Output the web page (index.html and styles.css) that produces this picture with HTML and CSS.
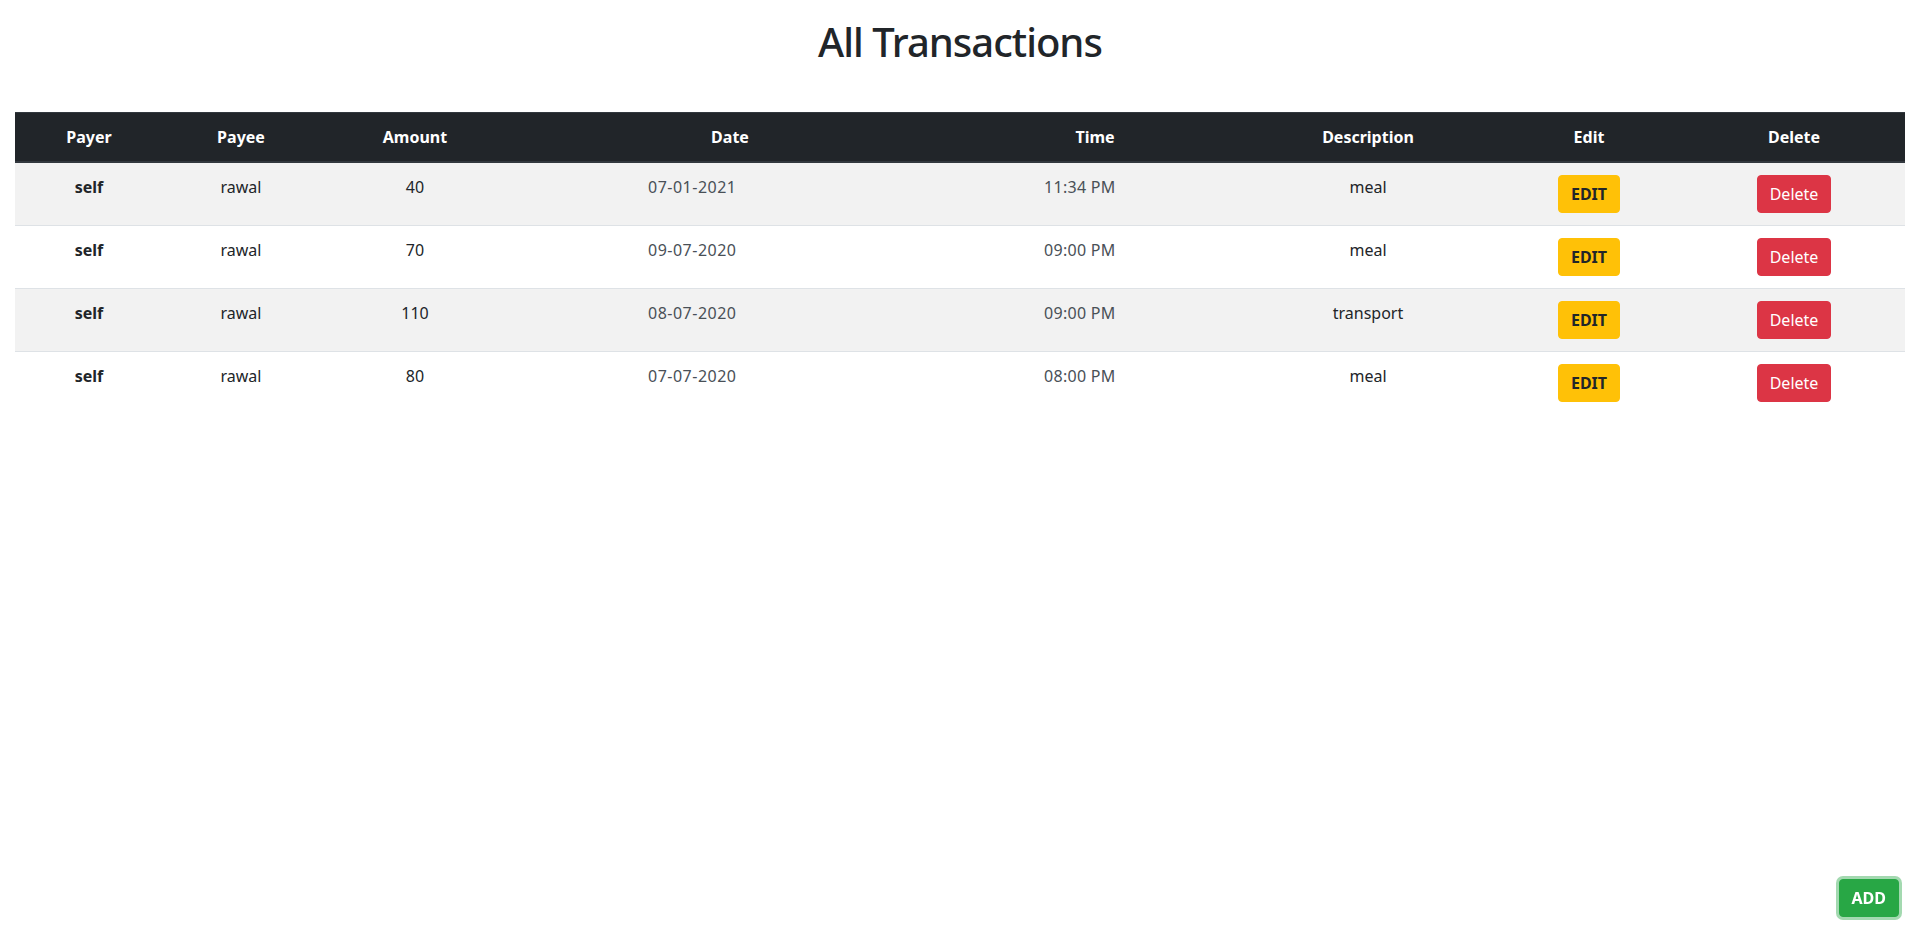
FILE: index.html
```html
<!DOCTYPE html>
<html lang="en">
<head>
<meta charset="utf-8">
<title>All Transactions</title>
<link rel="stylesheet" href="styles.css">
</head>
<body>
<div class="container">
  <h1 class="title">All Transactions</h1>
  <table class="tx-table">
    <colgroup>
      <col class="c-payer"><col class="c-payee"><col class="c-amount"><col class="c-date">
      <col class="c-time"><col class="c-desc"><col class="c-edit"><col class="c-del">
    </colgroup>
    <thead>
      <tr><th>Payer</th><th>Payee</th><th>Amount</th><th>Date</th><th>Time</th><th>Description</th><th>Edit</th><th>Delete</th></tr>
    </thead>
    <tbody>
      <tr class="odd"><th>self</th><td>rawal</td><td>40</td><td class="date">07-01-2021</td><td class="time">11:34 PM</td><td>meal</td><td><button class="btn btn-edit">EDIT</button></td><td><button class="btn btn-del">Delete</button></td></tr>
      <tr><th>self</th><td>rawal</td><td>70</td><td class="date">09-07-2020</td><td class="time">09:00 PM</td><td>meal</td><td><button class="btn btn-edit">EDIT</button></td><td><button class="btn btn-del">Delete</button></td></tr>
      <tr class="odd"><th>self</th><td>rawal</td><td>110</td><td class="date">08-07-2020</td><td class="time">09:00 PM</td><td>transport</td><td><button class="btn btn-edit">EDIT</button></td><td><button class="btn btn-del">Delete</button></td></tr>
      <tr><th>self</th><td>rawal</td><td>80</td><td class="date">07-07-2020</td><td class="time">08:00 PM</td><td>meal</td><td><button class="btn btn-edit">EDIT</button></td><td><button class="btn btn-del">Delete</button></td></tr>
    </tbody>
  </table>
</div>
<button class="btn btn-add">ADD</button>
</body>
</html>
```
FILE: styles.css
```css
* { box-sizing: border-box; }
html, body { margin: 0; padding: 0; background: #fff; }
body {
  font-family: "Noto Sans", "Open Sans", "DejaVu Sans", sans-serif;
  font-size: 16px;
  line-height: 1.5;
  color: #212529;
}
.container { padding: 0 15px; }
.title {
  margin: 0;
  padding: 18px 0 46px;
  font-size: 40px;
  font-weight: 500;
  line-height: 48px;
  letter-spacing: -1px;
  text-align: center;
  color: #212529;
}
.tx-table {
  width: 100%;
  border-collapse: collapse;
  table-layout: fixed;
}
.c-payer { width: 148px; }
.c-payee { width: 156px; }
.c-amount { width: 192px; }
.c-date { width: 438px; }
.c-time { width: 292px; }
.c-desc { width: 254px; }
.c-edit { width: 188px; }
.c-del { width: 222px; }
.tx-table th, .tx-table td {
  padding: 12px;
  text-align: center;
  vertical-align: top;
  line-height: 24px;
}
.tx-table thead th {
  background: #212529;
  color: #fff;
  font-weight: 700;
  border-top: 1px solid #32383e;
  border-bottom: 2px solid #32383e;
}
.tx-table tbody tr { border-top: 1px solid #dee2e6; }
.tx-table tbody tr:first-child { border-top: 0; }
.tx-table tbody tr.odd { background: #f2f2f2; }
.tx-table tbody th { font-weight: 700; }
.tx-table td.date { text-align: left; padding-left: 137px; color: #495057; letter-spacing: 0.5px; word-spacing: 2px; }
.tx-table td.time { text-align: left; padding-left: 95px; color: #495057; letter-spacing: 0.3px; }
.btn {
  display: inline-block;
  font-family: inherit;
  font-size: 16px;
  line-height: 24px;
  padding: 6px 12px;
  border: 1px solid transparent;
  border-radius: 4px;
  cursor: pointer;
}
.btn-edit { background: #ffc107; border-color: #ffc107; color: #212529; font-weight: 700; }
.btn-del { background: #dc3545; border-color: #dc3545; color: #fff; font-weight: 400; }
.btn-add {
  position: fixed;
  right: 21px;
  bottom: 20px;
  background: #28a745;
  border-color: #28a745;
  color: #fff;
  font-weight: 700;
  box-shadow: 0 0 0 3px rgba(72, 180, 97, 0.5);
}
```
